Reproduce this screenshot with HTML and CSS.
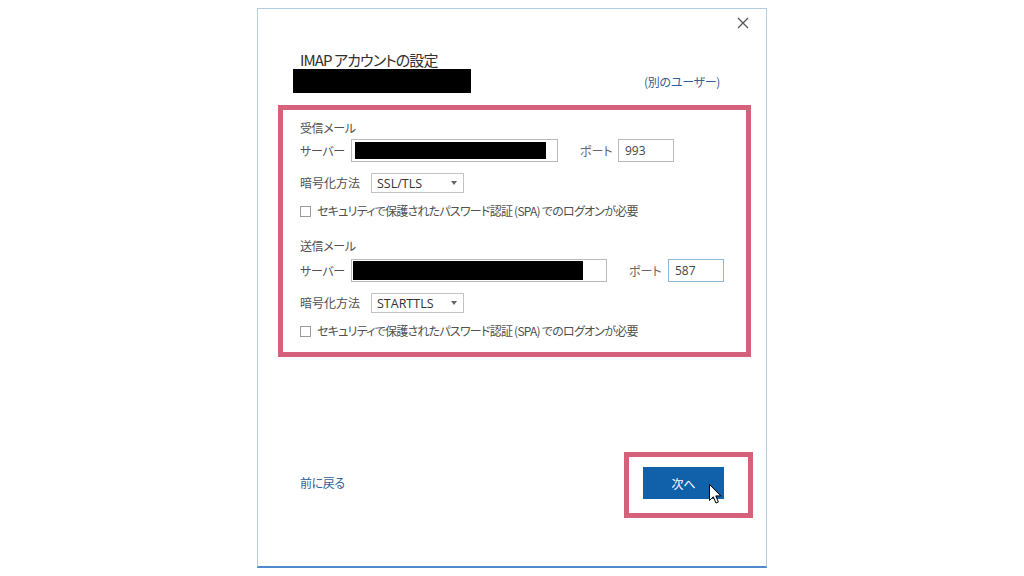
FILE: index.html
```html
<!DOCTYPE html>
<html lang="ja">
<head>
<meta charset="utf-8">
<title>IMAP アカウントの設定</title>
<link rel="stylesheet" href="styles.css">
</head>
<body>
<div class="dialog">
  <div class="topbar">
    <svg class="close" width="12" height="12" viewBox="0 0 12 12"><path d="M1 1 L11 11 M11 1 L1 11" stroke="#555" stroke-width="1.3" fill="none"/></svg>
  </div>
  <div class="title">IMAP アカウントの設定</div>
  <div class="account-row">
    <div class="redact redact-account"></div>
    <a class="link other-user">(別のユーザー)</a>
  </div>
  <div class="highlight settings">
    <div class="section-title">受信メール</div>
    <div class="server-row">
      <span class="label server-label">サーバー</span>
      <div class="input server-in"><div class="redact redact-in"></div></div>
      <span class="label port-label">ポート</span>
      <div class="input port">993</div>
    </div>
    <div class="enc-row">
      <span class="label enc-label">暗号化方法</span>
      <div class="select">SSL/TLS<span class="caret"></span></div>
    </div>
    <div class="check-row">
      <span class="checkbox"></span>
      <span class="label check-label">セキュリティで保護されたパスワード認証 (SPA) でのログオンが必要</span>
    </div>
    <div class="section-title out-title">送信メール</div>
    <div class="server-row out-server">
      <span class="label server-label">サーバー</span>
      <div class="input server-out"><div class="redact redact-out"></div></div>
      <span class="label port-label port-label-out">ポート</span>
      <div class="input port port-focus">587</div>
    </div>
    <div class="enc-row">
      <span class="label enc-label">暗号化方法</span>
      <div class="select">STARTTLS<span class="caret"></span></div>
    </div>
    <div class="check-row">
      <span class="checkbox"></span>
      <span class="label check-label">セキュリティで保護されたパスワード認証 (SPA) でのログオンが必要</span>
    </div>
  </div>
  <div class="bottom-row">
    <a class="link back">前に戻る</a>
    <div class="highlight next-box">
      <button class="next">次へ</button>
      <svg class="cursor" width="13" height="20" viewBox="0 0 13 20"><path d="M0.5 0.5 L0.5 16.5 L4.3 12.8 L7 19 L9.4 18 L6.8 11.9 L11.8 11.9 Z" fill="#fff" stroke="#000" stroke-width="1" stroke-linejoin="round"/></svg>
    </div>
  </div>
</div>
</body>
</html>
```
FILE: styles.css
```css
* { box-sizing: border-box; }
html, body { margin: 0; padding: 0; background: #fff; }
body {
  font-family: "Noto Sans CJK JP", "Noto Sans", sans-serif;
  font-feature-settings: "palt";
  color: #505050;
  font-size: 12px;
}
.dialog {
  margin: 8px 0 0 257px;
  width: 510px;
  height: 560px;
  border: 1px solid #b3cde2;
  border-bottom: 2px solid #4e8acb;
  display: flex;
  flex-direction: column;
  position: relative;
  background: #fff;
}
.topbar {
  display: flex;
  justify-content: flex-end;
  padding: 8px 17px 0 0;
  height: 20px;
}
.title {
  margin: 21px 0 0 42px;
  font-size: 15px;
  line-height: 19px;
  letter-spacing: -0.9px;
  color: #303030;
}
.account-row {
  display: flex;
  align-items: center;
  margin-left: 35px;
  margin-right: 46px;
}
.redact { background: #000; }
.redact-account { flex: 0 0 178px; width: 178px; height: 24px; }
.link { color: #2f5f98; font-size: 12px; line-height: 16px; }
.other-user { margin: 2px 0 0 auto; letter-spacing: -0.3px; }
.highlight { border: 5px solid #d6617a; }
.settings {
  margin: 12px 0 0 20px;
  width: 473px;
  height: 252px;
  padding: 10px 0 0 17px;
}
.section-title { line-height: 16px; letter-spacing: -0.4px; }
.out-title { margin-top: 19px; }
.label { line-height: 16px; white-space: nowrap; }
.check-label { letter-spacing: -0.75px; }
.server-row {
  display: flex;
  align-items: center;
  margin-top: 3px;
}
.out-server { margin-top: 5px; }
.server-label { width: 51px; letter-spacing: -0.3px; }
.input {
  height: 23px;
  border: 1px solid #b9b9b9;
  background: #fff;
  font-family: "Open Sans", "Noto Sans", sans-serif;
  font-size: 12px;
  color: #444;
  line-height: 21px;
}
.server-in { width: 207px; padding: 2px 11px 2px 3px; }
.server-out { width: 256px; padding: 1px 23px 1px 1px; }
.redact-in, .redact-out { height: 100%; }
.port-label { margin-left: 22px; width: 38px; color: #666; }
.port-label-out { width: 39px; }
.port { width: 56px; padding-left: 6px; }
.port-focus { border-color: #8db7d2; }
.enc-row {
  display: flex;
  align-items: center;
  margin-top: 11px;
}
.enc-label { width: 71px; }
.select {
  width: 93px;
  height: 20px;
  border: 1px solid #c2c2c2;
  padding: 0 0 0 5px;
  display: flex;
  align-items: center;
  justify-content: space-between;
  font-family: "Open Sans", "Noto Sans", sans-serif;
  font-size: 12.5px;
  color: #333;
}
.caret {
  width: 0; height: 0;
  border-left: 3.5px solid transparent;
  border-right: 3.5px solid transparent;
  border-top: 4px solid #666;
  margin-right: 6px;
}
.check-row {
  display: flex;
  align-items: center;
  margin-top: 10px;
}
.checkbox {
  width: 11px;
  height: 11px;
  border: 1px solid #9a9a9a;
  margin-right: 6px;
  background: #fff;
}
.bottom-row {
  display: flex;
  justify-content: space-between;
  align-items: center;
  margin-top: 95px;
  padding: 0 13px 0 42px;
}
.back { margin-top: -4px; letter-spacing: -0.4px; }
.next-box {
  position: relative;
  width: 129px;
  height: 66px;
  padding: 10px 0 0 14px;
}
.next {
  display: block;
  width: 81px;
  height: 32px;
  border: none;
  background: #1160aa;
  color: #fff;
  font-family: "Noto Sans CJK JP", sans-serif;
  font-feature-settings: "palt";
  font-size: 12px;
  padding: 0;
}
.cursor {
  position: absolute;
  left: 80px;
  top: 27px;
}
```
